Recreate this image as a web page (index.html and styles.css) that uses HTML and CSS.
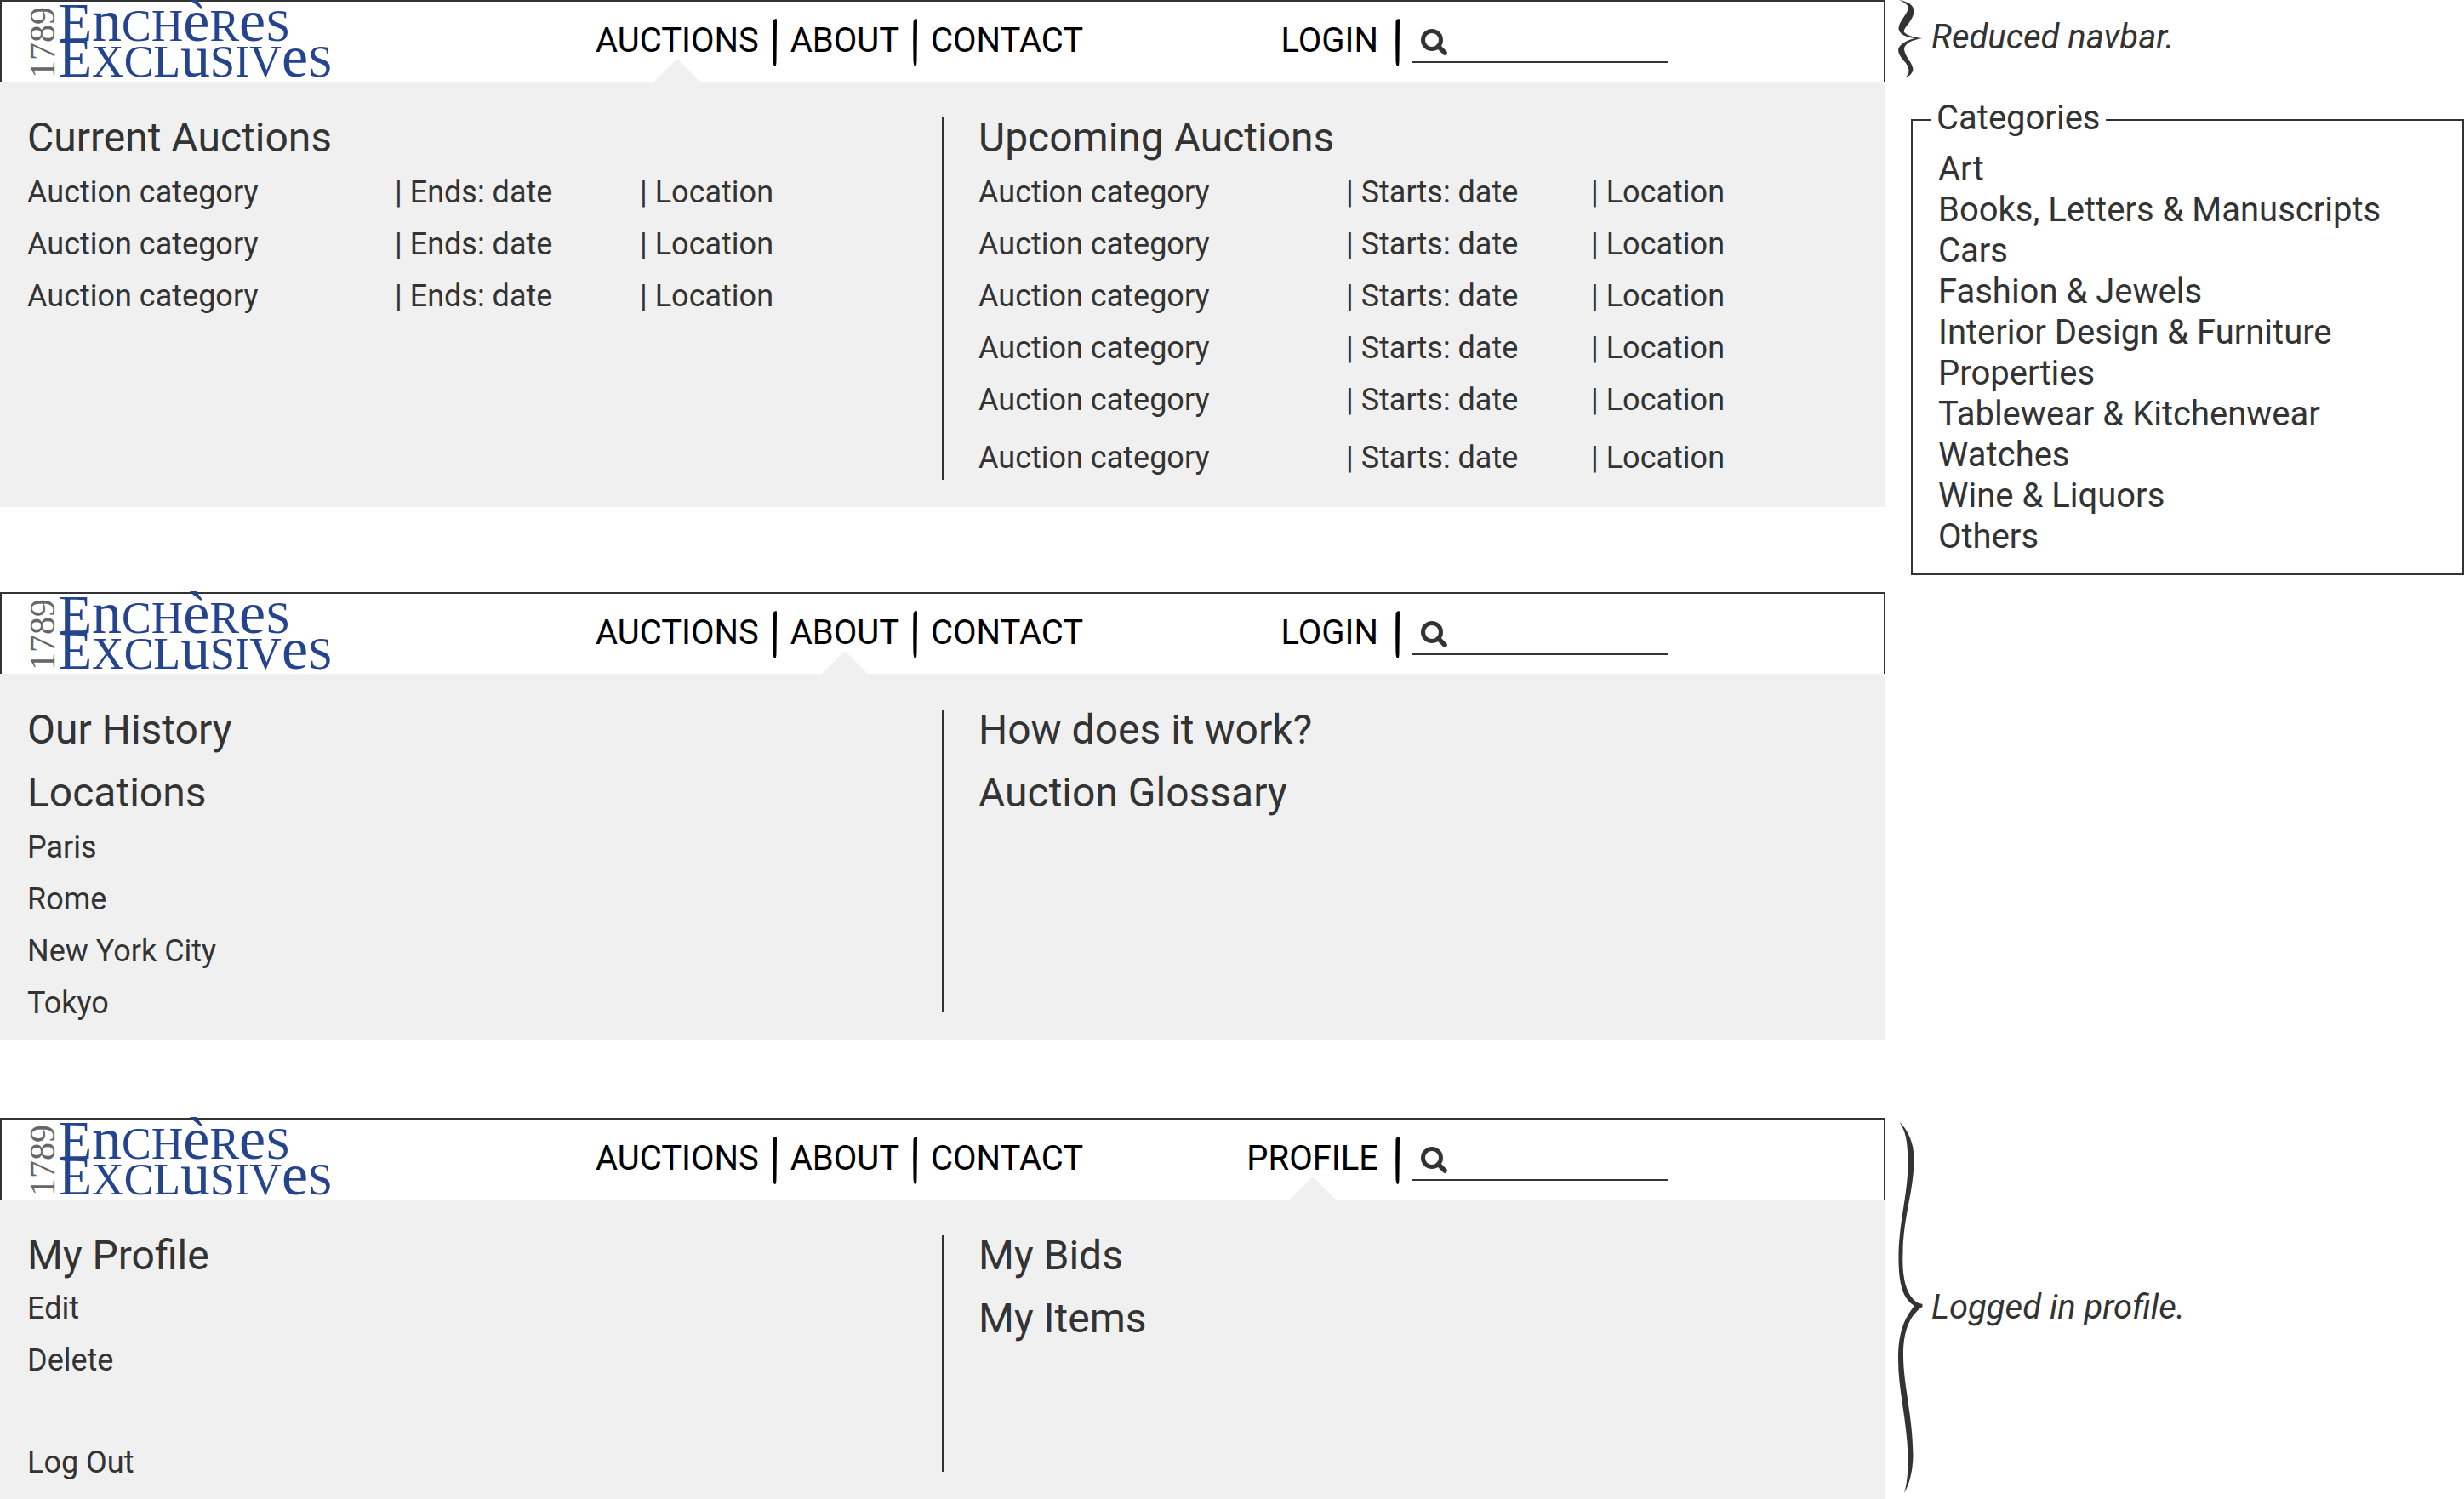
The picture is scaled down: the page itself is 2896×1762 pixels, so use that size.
FILE: index.html
```html
<!DOCTYPE html>
<html lang="en">
<head>
<meta charset="utf-8">
<meta name="viewport" content="width=device-width, initial-scale=1">
<title>Enchères Exclusives – navigation</title>
<link rel="stylesheet" href="styles.css">
</head>
<body>
<svg class="sprite" aria-hidden="true">
  <symbol id="bar" viewBox="0 0 5 56"><path d="M0.5 3Q1 0.500 4 0Q5 0 5 2L4.500 48Q4.500 56 3 56Q1 56 0.500 50Q0 25 0.500 3Z"/></symbol>
  <symbol id="search" viewBox="0 0 31 31"><circle cx="13" cy="13" r="10.500" fill="none" stroke="currentColor" stroke-width="5"/><path d="M20.500 20.500L28 28" stroke="currentColor" stroke-width="5.500" stroke-linecap="round"/></symbol>
</svg>
<main class="page">
  <section class="board">
    <header class="navbar">
      <a class="logo" href="#"><span class="year">1789</span><span class="name"><span class="line"><b>E</b><i>n</i>CH<i>è</i>R<i>e</i>S</span><span class="line"><b>E</b>XCL<i>u</i>SIV<i>e</i>S</span></span></a>
      <nav class="menu">
        <a class="open" href="#">AUCTIONS</a><svg class="bar"><use href="#bar"/></svg><a href="#">ABOUT</a><svg class="bar"><use href="#bar"/></svg><a href="#">CONTACT</a>
      </nav>
      <div class="account"><a href="#">LOGIN</a><svg class="bar"><use href="#bar"/></svg></div>
      <label class="search"><svg class="glass" aria-label="Search"><use href="#search"/></svg><input type="search"></label>
    </header>
    <div class="panel">
      <div class="col auctions">
        <h2>Current Auctions</h2>
        <table>
          <tr><td>Auction category</td><td>| Ends: date</td><td>| Location</td></tr>
          <tr><td>Auction category</td><td>| Ends: date</td><td>| Location</td></tr>
          <tr><td>Auction category</td><td>| Ends: date</td><td>| Location</td></tr>
        </table>
      </div>
      <div class="col auctions">
        <h2>Upcoming Auctions</h2>
        <table>
          <tr><td>Auction category</td><td>| Starts: date</td><td>| Location</td></tr>
          <tr><td>Auction category</td><td>| Starts: date</td><td>| Location</td></tr>
          <tr><td>Auction category</td><td>| Starts: date</td><td>| Location</td></tr>
          <tr><td>Auction category</td><td>| Starts: date</td><td>| Location</td></tr>
          <tr><td>Auction category</td><td>| Starts: date</td><td>| Location</td></tr>
          <tr class="later"><td>Auction category</td><td>| Starts: date</td><td>| Location</td></tr>
        </table>
      </div>
    </div>
  </section>
  <aside class="notes">
    <div class="note short">
      <svg class="brace" viewBox="0 0 29 92"><path d="M1 0Q18 3 18.500 13C18.500 23 7 32 6.500 37Q10 43 28.500 45Q9 48 7 57C7 66 17 73 17.500 82Q16 89 8 91Q14 87 12 80C10 72 0 68 0 58Q3 49 20 45Q2 43 0.500 34C0 26 11 17 12 9Q11 4 1 0Z"/></svg>
      <em>Reduced navbar.</em>
    </div>
    <fieldset class="categories">
      <legend>Categories</legend>
      <ul>
        <li>Art</li><li>Books, Letters &amp; Manuscripts</li><li>Cars</li><li>Fashion &amp; Jewels</li><li>Interior Design &amp; Furniture</li><li>Properties</li><li>Tablewear &amp; Kitchenwear</li><li>Watches</li><li>Wine &amp; Liquors</li><li>Others</li>
      </ul>
    </fieldset>
  </aside>

  <section class="board about">
    <header class="navbar">
      <a class="logo" href="#"><span class="year">1789</span><span class="name"><span class="line"><b>E</b><i>n</i>CH<i>è</i>R<i>e</i>S</span><span class="line"><b>E</b>XCL<i>u</i>SIV<i>e</i>S</span></span></a>
      <nav class="menu">
        <a href="#">AUCTIONS</a><svg class="bar"><use href="#bar"/></svg><a class="open" href="#">ABOUT</a><svg class="bar"><use href="#bar"/></svg><a href="#">CONTACT</a>
      </nav>
      <div class="account"><a href="#">LOGIN</a><svg class="bar"><use href="#bar"/></svg></div>
      <label class="search"><svg class="glass" aria-label="Search"><use href="#search"/></svg><input type="search"></label>
    </header>
    <div class="panel">
      <div class="col">
        <h2>Our History</h2>
        <h2>Locations</h2>
        <ul class="links"><li><a href="#">Paris</a></li><li><a href="#">Rome</a></li><li><a href="#">New York City</a></li><li><a href="#">Tokyo</a></li></ul>
      </div>
      <div class="col">
        <h2>How does it work?</h2>
        <h2>Auction Glossary</h2>
      </div>
    </div>
  </section>

  <section class="board profile">
    <header class="navbar">
      <a class="logo" href="#"><span class="year">1789</span><span class="name"><span class="line"><b>E</b><i>n</i>CH<i>è</i>R<i>e</i>S</span><span class="line"><b>E</b>XCL<i>u</i>SIV<i>e</i>S</span></span></a>
      <nav class="menu">
        <a href="#">AUCTIONS</a><svg class="bar"><use href="#bar"/></svg><a href="#">ABOUT</a><svg class="bar"><use href="#bar"/></svg><a href="#">CONTACT</a>
      </nav>
      <div class="account"><a class="open" href="#">PROFILE</a><svg class="bar"><use href="#bar"/></svg></div>
      <label class="search"><svg class="glass" aria-label="Search"><use href="#search"/></svg><input type="search"></label>
    </header>
    <div class="panel">
      <div class="col">
        <h2>My Profile</h2>
        <ul class="links"><li><a href="#">Edit</a></li><li><a href="#">Delete</a></li><li class="logout"><a href="#">Log Out</a></li></ul>
      </div>
      <div class="col">
        <h2>My Bids</h2>
        <h2>My Items</h2>
      </div>
    </div>
  </section>
  <aside class="notes profile-note">
    <div class="note tall">
      <svg class="brace" viewBox="0 0 29 438"><path d="M1 0C12 11 18 25 18.500 42C19 82 6 110 5.500 155C4 190 12 206 22 213L28.500 215V218C14 228 6 245 6 275C6 310 17 345 17.500 393C17 413 13 427 7 437C11 425 12 405 11.500 393C10 350 0 315 0 280C0 248 7 232 19 217C5 209 1 190 0.500 165C0 120 11 90 11.500 50C11 25 10 14 1 0Z"/></svg>
      <em>Logged in profile.</em>
    </div>
  </aside>
</main>
</body>
</html>
```
FILE: styles.css
```css
* { box-sizing: border-box; }
body {
  margin: 0;
  background: #fff;
  color: #333;
  font-family: Roboto, "Liberation Sans", sans-serif;
  font-size: 40px;
  line-height: 48px;
}
a { color: inherit; text-decoration: none; }
ul { list-style: none; margin: 0; padding: 0; }
.sprite { position: absolute; width: 0; height: 0; }

.page {
  display: grid;
  grid-template-columns: minmax(0, 2216fr) minmax(0, 680fr);
  align-items: start;
}
.about { grid-column: 1; margin-top: 20px; }
.profile { grid-column: 1; margin-top: 92px; }
.profile-note { margin-top: 92px; }

/* Navigation bar */
.navbar {
  display: grid;
  grid-template-columns: 668fr 710fr 235fr 315fr 254fr;
  height: 96px;
  padding-left: 30px;
  border: 2px solid #333;
  border-bottom: 0;
  color: #000;
}
.menu, .account { display: flex; align-items: flex-start; gap: 16px; padding-top: 20px; }
.account { justify-content: flex-end; gap: 20px; }
.menu a, .account a { position: relative; padding-top: 2px; }
.bar { width: 5px; height: 56px; flex: none; }
.open::after {
  content: "";
  position: absolute;
  left: 50%;
  top: 48px;
  width: 54px;
  height: 26px;
  margin-left: -27px;
  background: #f0f0f0;
  clip-path: polygon(46% 4%, 50% 0, 54% 4%, 100% 100%, 0 100%);
}
.search {
  display: flex;
  min-width: 0;
  height: 72px;
  margin-left: 15px;
  padding: 32px 0 0 10px;
  border-bottom: 2px solid #333;
  color: #333;
}
.glass { width: 31px; height: 31px; flex: none; }
.search input {
  flex: 1;
  width: 0;
  min-width: 0;
  height: 36px;
  padding: 0 8px;
  border: 0;
  outline: 0;
  background: none;
  font: inherit;
}

/* Logo */
.logo {
  display: flex;
  font-family: "Liberation Serif", serif;
  color: #24448e;
}
.year {
  writing-mode: vertical-rl;
  transform: rotate(180deg);
  width: 37px;
  height: 90px;
  font-size: 42px;
  line-height: 37px;
  color: #666;
}
.name { display: block; padding-top: 8px; }
.line { display: block; height: 42px; font-size: 52px; line-height: 42px; white-space: nowrap; }
.line b, .line i { font-weight: 400; font-style: normal; line-height: 0; }
.line b { font-size: 64px; }
.line i { font-size: 70px; }

/* Drop-down panel */
.panel {
  display: grid;
  grid-template-columns: 1fr 1fr;
  padding: 42px 0 19px;
  background: #f0f0f0;
}
.col { position: relative; padding-left: 32px; }
.col + .col { padding-left: 42px; }
.col + .col::before {
  content: "";
  position: absolute;
  left: -1px;
  top: 0;
  bottom: 13px;
  width: 2px;
  background: #333;
}
.auctions { padding-bottom: 15px; }
h2 { margin: 0; font-size: 48px; line-height: 48px; font-weight: 400; }
h2 + h2 { margin-top: 26px; }
table {
  width: 100%;
  margin-top: 16px;
  border-spacing: 0;
  table-layout: fixed;
  font-size: 36px;
}
td { height: 61px; padding: 0 0 13px; white-space: nowrap; }
td:nth-child(1) { width: 432px; }
td:nth-child(2) { width: 288px; }
tr:last-child td { height: 48px; padding-bottom: 0; }
tr.later:last-child td { height: 55px; padding-top: 7px; }
.links { display: grid; gap: 13px; margin-top: 16px; font-size: 36px; }
.profile .links { margin-top: 14px; }
.logout { margin-top: 59px; }

/* Side notes */
.note { display: flex; align-items: center; gap: 10px; padding-left: 15px; }
.short { height: 92px; }
.short em { padding-bottom: 4px; }
.brace { flex: none; width: 29px; fill: #333; }
.short .brace { height: 92px; }
.tall { padding-top: 4px; }
.tall .brace { height: 438px; }
.categories {
  margin: 23px 0 0 30px;
  padding: 8px 0 19px 30px;
  border: 2px solid #333;
}
.categories legend { margin-left: -8px; padding: 0 6px 4px; }
```
